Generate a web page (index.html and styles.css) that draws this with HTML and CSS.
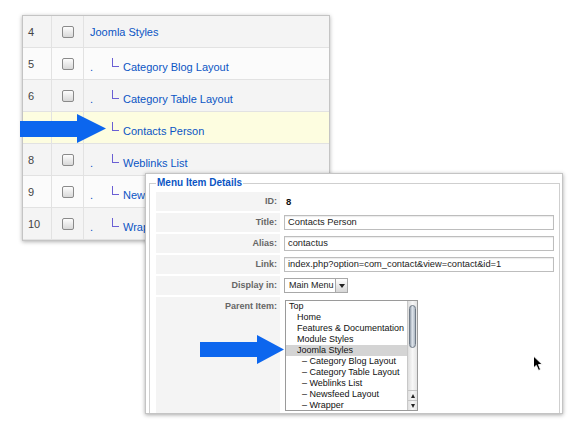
FILE: index.html
```html
<!DOCTYPE html>
<html>
<head>
<meta charset="utf-8">
<title>Menu Item Details</title>
<link rel="stylesheet" href="styles.css">
</head>
<body>
<div class="canvas">
  <div class="list-panel">
    <div class="row odd">
      <div class="cell num">4</div>
      <div class="cell chk"><span class="box"></span></div>
      <div class="cell title">Joomla Styles</div>
    </div>
    <div class="row even">
      <div class="cell num">5</div>
      <div class="cell chk"><span class="box"></span></div>
      <div class="cell title sub"><span class="dot">.</span><span class="tree"></span>Category Blog Layout</div>
    </div>
    <div class="row odd">
      <div class="cell num">6</div>
      <div class="cell chk"><span class="box"></span></div>
      <div class="cell title sub"><span class="dot">.</span><span class="tree"></span>Category Table Layout</div>
    </div>
    <div class="row hl">
      <div class="cell num">7</div>
      <div class="cell chk"><span class="box"></span></div>
      <div class="cell title sub"><span class="dot">.</span><span class="tree"></span>Contacts Person</div>
    </div>
    <div class="row odd">
      <div class="cell num">8</div>
      <div class="cell chk"><span class="box"></span></div>
      <div class="cell title sub"><span class="dot">.</span><span class="tree"></span>Weblinks List</div>
    </div>
    <div class="row even">
      <div class="cell num">9</div>
      <div class="cell chk"><span class="box"></span></div>
      <div class="cell title sub"><span class="dot">.</span><span class="tree"></span>Newsfeed Layout</div>
    </div>
    <div class="row odd">
      <div class="cell num">10</div>
      <div class="cell chk"><span class="box"></span></div>
      <div class="cell title sub"><span class="dot">.</span><span class="tree"></span>Wrapper</div>
    </div>
  </div>

  <div class="detail-panel">
    <fieldset class="fieldset">
      <legend class="legend">Menu Item Details</legend>
      <div class="form">
        <div class="label">ID:</div>
        <div class="value"><span class="idval">8</span></div>
        <div class="label">Title:</div>
        <div class="value"><span class="input">Contacts Person</span></div>
        <div class="label">Alias:</div>
        <div class="value"><span class="input">contactus</span></div>
        <div class="label">Link:</div>
        <div class="value"><span class="input">index.php?option=com_contact&amp;view=contact&amp;id=1</span></div>
        <div class="label">Display in:</div>
        <div class="value"><span class="select"><span class="select-text">Main Menu</span><span class="select-btn"><span class="tri"></span></span></span></div>
        <div class="label label-top">Parent Item:</div>
        <div class="value value-top">
          <div class="listbox">
            <div class="items">
              <div class="item">Top</div>
              <div class="item l1">Home</div>
              <div class="item l1">Features &amp; Documentation</div>
              <div class="item l1">Module Styles</div>
              <div class="item l1 selected">Joomla Styles</div>
              <div class="item l2">– Category Blog Layout</div>
              <div class="item l2">– Category Table Layout</div>
              <div class="item l2">– Weblinks List</div>
              <div class="item l2">– Newsfeed Layout</div>
              <div class="item l2">– Wrapper</div>
            </div>
            <div class="scrollbar">
              <div class="track"><div class="thumb"></div></div>
              <div class="sb-btn"><span class="up"></span></div>
              <div class="sb-btn"><span class="down"></span></div>
            </div>
          </div>
        </div>
      </div>
    </fieldset>
  </div>

  <svg class="arrow arrow-1" width="86" height="29" viewBox="0 0 86 29"><polygon points="0,7 57,7 57,0 86,14.5 57,29 57,23 0,23" fill="#0c66ee"/></svg>
  <svg class="arrow arrow-2" width="84" height="29" viewBox="0 0 84 29"><polygon points="0,7 57,7 57,0 84,14.5 57,29 57,22 0,22" fill="#0c66ee"/></svg>
  <svg class="cursor" width="13" height="18" viewBox="0 0 13 18"><path d="M1.5,1 L1.5,13 L4.3,10.4 L6.5,15.5 L8.6,14.6 L6.5,9.6 L10.4,9.6 Z" fill="#000" stroke="#fff" stroke-width="1" stroke-linejoin="round"/></svg>
</div>
</body>
</html>
```

FILE: styles.css
```css
* { box-sizing: border-box; }
body { margin: 0; background: #fff; font-family: "Liberation Sans", Arial, sans-serif; }
.canvas { position: relative; width: 584px; height: 425px; overflow: hidden; }

/* list panel */
.list-panel {
  position: absolute; left: 22px; top: 15px; width: 308px; height: 226px;
  background: #fff; border: 1px solid #c4c4c4;
  box-shadow: 0 1px 4px rgba(0,0,0,.3); overflow: hidden;
}
.row { display: grid; grid-template-columns: 29px 32px 1fr; height: 32px; border-bottom: 1px solid #e2e2e2; }
.row.odd { background: #f4f4f4; }
.row.even { background: #fbfbfb; }
.row.hl { background: #fdfde0; }
.cell { border-right: 1px solid #e2e2e2; }
.num { display: flex; align-items: center; padding-left: 5px; font-size: 11px; color: #444; }
.chk { display: flex; align-items: center; justify-content: center; }
.box {
  width: 12px; height: 12px; border: 1px solid #8a8a8a; border-radius: 2px;
  background: linear-gradient(#fdfdfd, #d8d8d8);
}
.title {
  border-right: 0; padding: 10px 0 0 6px; font-size: 11px; line-height: 13px;
  color: #0b55c4; white-space: nowrap;
}
.title.sub { padding-top: 10px; }
.dot { display: inline-block; width: 22px; }
.tree {
  display: inline-block; width: 7px; height: 9px; margin-right: 4px;
  border-left: 1px solid #6a5fd4; border-bottom: 1px solid #6a5fd4; vertical-align: 4px;
}

/* detail panel */
.detail-panel {
  position: absolute; left: 145px; top: 173px; width: 418px; height: 241px;
  background: #fff; border: 1px solid #c4c4c4;
  box-shadow: 0 1px 4px rgba(0,0,0,.35); padding: 3px 2px 0 3px; overflow: hidden;
}
.fieldset { border: 1px solid #cfcfcf; margin: 0; padding: 3px 6px 4px 6px; min-width: 0; }
.legend { padding: 0 1px; font-size: 10px; line-height: 12px; font-weight: bold; color: #0b55c4; }
.form {
  display: grid; grid-template-columns: 124px 1fr;
  grid-template-rows: repeat(5, 19px) 120px; column-gap: 4px; row-gap: 2px;
}
.label {
  background: #f4f4f4; text-align: right; padding-right: 3px;
  font-size: 9px; line-height: 19px; font-weight: bold; color: #666;
}
.label-top { line-height: 12px; padding-top: 3px; }
.value { display: flex; align-items: center; }
.value-top { align-items: flex-start; }
.idval { font-size: 9.5px; font-weight: bold; color: #111; padding-left: 2px; }
.input {
  display: block; width: 270px; height: 15px; border: 1px solid #bdbdbd;
  box-shadow: inset 0 1px 1px rgba(0,0,0,.08);
  padding: 0 3px; font-size: 9.3px; line-height: 13px; color: #222; white-space: nowrap; overflow: hidden;
}
.select {
  display: flex; width: 64px; height: 15px; border: 1px solid #a8a8a8;
  font-size: 9px; line-height: 13px; color: #222;
}
.select-text { flex: 1; padding-left: 4px; white-space: nowrap; }
.select-btn {
  width: 12px; border-left: 1px solid #a8a8a8; background: linear-gradient(#fff, #d6d6d6);
  display: flex; align-items: center; justify-content: center;
}
.tri { width: 0; height: 0; border-left: 3px solid transparent; border-right: 3px solid transparent; border-top: 4px solid #222; }

.listbox {
  display: flex; width: 133px; height: 111px; margin-top: 3px; margin-left: 1px;
  border: 1px solid #9a9a9a; background: #fff; overflow: hidden;
}
.items { flex: 1; min-width: 0; font-size: 9px; line-height: 11px; color: #111; }
.item { padding-left: 3px; white-space: nowrap; }
.item.l1 { padding-left: 11px; }
.item.l2 { padding-left: 16px; }
.item.selected { background: #d4d4d4; }
.scrollbar {
  width: 10px; display: flex; flex-direction: column;
  background: linear-gradient(90deg, #dedede, #f7f7f7 50%, #e4e4e4);
  border-left: 1px solid #c8c8c8;
}
.track { flex: 1; padding: 4px 1px 0 1px; }
.thumb {
  height: 43px; border-radius: 4px; border: 1px solid #6f7a86;
  background: linear-gradient(90deg, #8e99a6, #dfe5ec 45%, #aeb8c3);
}
.sb-btn { height: 10px; display: flex; align-items: center; justify-content: center; border-top: 1px solid #c4c4c4; }
.up { width: 0; height: 0; border-left: 2px solid transparent; border-right: 2px solid transparent; border-bottom: 4px solid #222; }
.down { width: 0; height: 0; border-left: 2px solid transparent; border-right: 2px solid transparent; border-top: 4px solid #222; }

/* overlays */
.arrow { position: absolute; }
.arrow-1 { left: 20px; top: 114px; }
.arrow-2 { left: 200px; top: 335px; }
.cursor { position: absolute; left: 532px; top: 355px; }
```
